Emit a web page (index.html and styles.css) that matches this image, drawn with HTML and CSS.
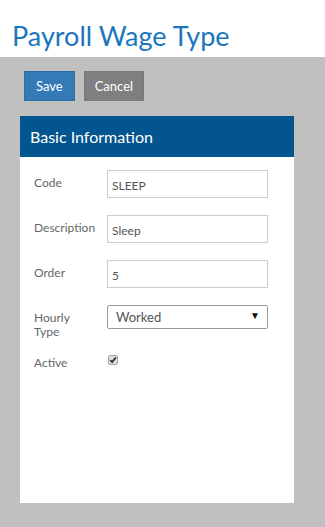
FILE: index.html
```html
<!DOCTYPE html>
<html lang="en">

<head>
    <meta charset="UTF-8">
    <meta name="viewport" content="width=device-width, initial-scale=1.0">
    <title>Payroll Wage Type</title>
    <link rel="stylesheet" href="styles.css">
</head>

<body>
    <header class="page-head">
        <h1>Payroll Wage Type</h1>
    </header>

    <main class="page-body">
        <div class="toolbar">
            <button type="button" class="btn btn-save">Save</button>
            <button type="button" class="btn btn-cancel">Cancel</button>
        </div>

        <section class="panel">
            <div class="panel-head">Basic Information</div>
            <form class="panel-body" id="wageForm">
                <div class="row">
                    <label for="code">Code</label>
                    <input type="text" id="code" name="code" value="SLEEP">
                </div>
                <div class="row">
                    <label for="description">Description</label>
                    <input type="text" id="description" name="description" value="Sleep">
                </div>
                <div class="row">
                    <label for="order">Order</label>
                    <input type="text" id="order" name="order" value="5">
                </div>
                <div class="row">
                    <label for="hourly_type">Hourly Type</label>
                    <span class="select-wrap">
                        <select id="hourly_type" name="hourly_type">
                            <option>Worked</option>
                            <option>Not Worked</option>
                        </select>
                    </span>
                </div>
                <div class="row">
                    <label for="active">Active</label>
                    <span class="check" id="active">
                        <svg width="10" height="10" viewBox="0 0 10 10">
                            <rect x="0.5" y="0.5" width="9" height="9" rx="1.5" fill="#dcdcdc" stroke="#a8a8a8"/>
                            <path d="M2.3 5.2 L4.2 7.1 L7.8 2.6" fill="none" stroke="#222" stroke-width="1.6"/>
                        </svg>
                    </span>
                </div>
            </form>
        </section>
    </main>
</body>

</html>
```

FILE: styles.css
```css
/* page */
body {
    font-family: 'Lato', 'Open Sans', sans-serif;
    background-color: #c0c0c0;
    margin: 0;
    padding: 0;
}

.page-head {
    background-color: #ffffff;
    height: 57px;
    padding: 0 12px;
}

.page-head h1 {
    margin: 0;
    padding-top: 20px;
    font-size: 27px;
    font-weight: normal;
    line-height: 32px;
    color: #1b76bd;
}

.page-body {
    padding: 14px 31px 24px 20px;
}

/* buttons */
.toolbar {
    display: flex;
    gap: 9px;
    padding-left: 4px;
    margin-bottom: 15px;
}

.btn {
    font-family: 'Lato', sans-serif;
    font-size: 13px;
    height: 30px;
    padding: 0 11px;
    border: 1px solid transparent;
    color: #ffffff;
    cursor: pointer;
}

.btn-save {
    background-color: #337ab7;
    border-color: #2e6da4;
}

.btn-cancel {
    background-color: #7f7f81;
    border-color: #7a7a7c;
    padding: 0 10px;
}

/* panel */
.panel {
    background-color: #ffffff;
}

.panel-head {
    background-color: #02558f;
    color: #ffffff;
    font-size: 16px;
    height: 41px;
    line-height: 41px;
    padding: 0 10px;
}

.panel-body {
    height: 333px;
    padding: 13px 14px 0 14px;
}

.row {
    display: flex;
    align-items: flex-start;
    height: 45px;
}

.row label {
    width: 61px;
    margin-right: 12px;
    padding-top: 6px;
    font-size: 12px;
    line-height: 14px;
    color: #666666;
}

.row input[type="text"] {
    width: 161px;
    height: 28px;
    box-sizing: border-box;
    padding: 2px 4px 0 4px;
    border: 1px solid #cccccc;
    font-family: 'Lato', sans-serif;
    font-size: 12px;
    color: #555555;
}

.select-wrap {
    position: relative;
    display: block;
}

.select-wrap select {
    appearance: none;
    width: 161px;
    height: 24px;
    padding: 0 8px;
    border: 1px solid #9a9a9a;
    border-radius: 2px;
    background-color: #ffffff;
    font-family: 'Lato', sans-serif;
    font-size: 13px;
    color: #555555;
}

.select-wrap::after {
    content: "\25BC";
    position: absolute;
    right: 8px;
    top: 4px;
    font-size: 10px;
    color: #111111;
    pointer-events: none;
}

.check {
    display: block;
    width: 10px;
    height: 10px;
    margin: 5px 0 0 1px;
}

.check svg {
    display: block;
}
```
